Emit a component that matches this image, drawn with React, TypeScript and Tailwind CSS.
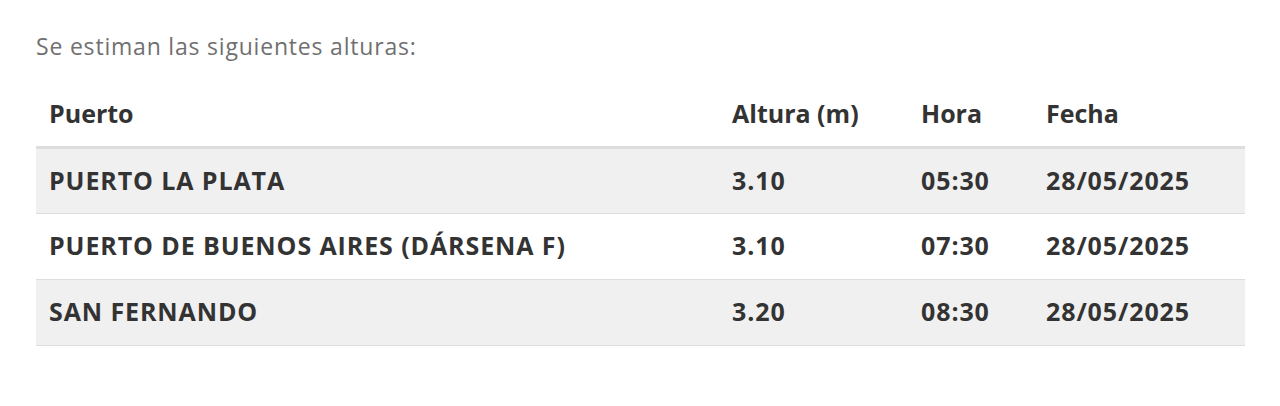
const rows = [
  { puerto: "PUERTO LA PLATA", altura: "3.10", hora: "05:30", fecha: "28/05/2025" },
  { puerto: "PUERTO DE BUENOS AIRES (DÁRSENA F)", altura: "3.10", hora: "07:30", fecha: "28/05/2025" },
  { puerto: "SAN FERNANDO", altura: "3.20", hora: "08:30", fecha: "28/05/2025" },
];

export default function App() {
  return (
    <div
      className="h-[406px] w-[1280px] bg-white px-9 pt-[29px] text-[#333]"
      style={{ fontFamily: "'Open Sans', Roboto, sans-serif" }}
    >
      <p className="text-[23px] leading-[34px] tracking-[0.8px] text-[#707070]">
        Se estiman las siguientes alturas:
      </p>
      <table className="mt-[18px] w-[1209px] table-fixed border-collapse text-[25px] font-bold">
        <colgroup>
          <col className="w-[683px]" />
          <col className="w-[189px]" />
          <col className="w-[125px]" />
          <col />
        </colgroup>
        <thead>
          <tr className="h-[66px] border-b-[3px] border-[#ddd] text-left">
            <th className="px-[13px] font-bold">Puerto</th>
            <th className="px-[13px] font-bold">Altura (m)</th>
            <th className="px-[13px] font-bold">Hora</th>
            <th className="px-[13px] font-bold">Fecha</th>
          </tr>
        </thead>
        <tbody className="tracking-[0.9px]">
          {rows.map((r, i) => (
            <tr
              key={r.puerto}
              className={`h-[66px] border-b border-[#ddd] ${i % 2 === 0 ? "bg-[#f0f0f0]" : "bg-white"}`}
            >
              <td className="px-[13px]">{r.puerto}</td>
              <td className="px-[13px]">{r.altura}</td>
              <td className="px-[13px]">{r.hora}</td>
              <td className="px-[13px]">{r.fecha}</td>
            </tr>
          ))}
        </tbody>
      </table>
    </div>
  );
}
